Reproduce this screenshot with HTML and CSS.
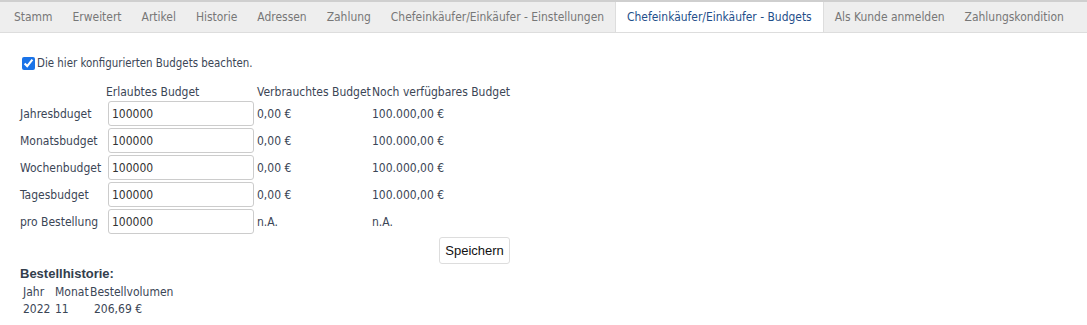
FILE: index.html
```html
<!DOCTYPE html>
<html lang="de">

<head>
    <meta charset="UTF-8">
    <meta name="viewport" content="width=device-width, initial-scale=1.0">
    <title>Budgets</title>
    <link rel="stylesheet" href="styles.css">
</head>

<body>
    <ul class="tabs">
        <li>Stamm</li>
        <li>Erweitert</li>
        <li>Artikel</li>
        <li>Historie</li>
        <li>Adressen</li>
        <li>Zahlung</li>
        <li>Chefeinkäufer/Einkäufer - Einstellungen</li>
        <li class="active">Chefeinkäufer/Einkäufer - Budgets</li>
        <li>Als Kunde anmelden</li>
        <li>Zahlungskondition</li>
    </ul>

    <div class="content">
        <label class="check">
            <input type="checkbox" checked>Die hier konfigurierten Budgets beachten.
        </label>

        <table class="budgets">
            <tr class="head">
                <td class="c1"></td>
                <td class="c2">Erlaubtes Budget</td>
                <td class="c3">Verbrauchtes Budget</td>
                <td>Noch verfügbares Budget</td>
            </tr>
            <tr>
                <td>Jahresbduget</td>
                <td><input type="text" value="100000"></td>
                <td>0,00 €</td>
                <td>100.000,00 €</td>
            </tr>
            <tr>
                <td>Monatsbudget</td>
                <td><input type="text" value="100000"></td>
                <td>0,00 €</td>
                <td>100.000,00 €</td>
            </tr>
            <tr>
                <td>Wochenbudget</td>
                <td><input type="text" value="100000"></td>
                <td>0,00 €</td>
                <td>100.000,00 €</td>
            </tr>
            <tr>
                <td>Tagesbudget</td>
                <td><input type="text" value="100000"></td>
                <td>0,00 €</td>
                <td>100.000,00 €</td>
            </tr>
            <tr>
                <td>pro Bestellung</td>
                <td><input type="text" value="100000"></td>
                <td>n.A.</td>
                <td>n.A.</td>
            </tr>
            <tr class="save">
                <td colspan="4"><button>Speichern</button></td>
            </tr>
        </table>

        <h3>Bestellhistorie:</h3>
        <table class="history">
            <tr>
                <td class="year">Jahr</td>
                <td class="month">Monat</td>
                <td>Bestellvolumen</td>
            </tr>
            <tr>
                <td>2022</td>
                <td>11</td>
                <td class="sum">206,69 €</td>
            </tr>
        </table>
    </div>
</body>

</html>
```

FILE: styles.css
```css
* {
    margin: 0;
    padding: 0;
    list-style: none;
    box-sizing: border-box;
}

body {
    font-family: "DejaVu Sans Condensed", "Liberation Sans", sans-serif;
    font-size: 12px;
    color: #3b4656;
    background: #fff;
}

.tabs {
    display: flex;
    height: 33px;
    background-color: #eeeeee;
    border-top: 2px solid #cfcfcf;
    border-bottom: 1px solid #dddddd;
    padding-left: 4px;
    overflow: hidden;
}

.tabs li {
    flex-shrink: 0;
    white-space: nowrap;
    padding: 0 10px;
    line-height: 30px;
    font-size: 11.95px;
    color: #777777;
}

.tabs .active {
    background-color: #fff;
    color: #1f4f8a;
    border-left: 1px solid #dddddd;
    border-right: 1px solid #dddddd;
    height: 31px;
    padding: 0 11px;
    margin: 0 1px 0 1px;
}

.content {
    padding: 23px 20px 0 20px;
}

.check {
    display: flex;
    align-items: center;
    line-height: 15px;
    margin-left: 1px;
    font-size: 11.4px;
}

.check input {
    width: 13px;
    height: 13px;
    margin: 0 2px 0 1px;
    accent-color: #1a73e8;
}

.budgets {
    border-collapse: collapse;
    margin-top: 13px;
}

.budgets td {
    padding: 0;
    height: 27px;
    vertical-align: middle;
    white-space: nowrap;
}

.budgets .head td {
    height: 16px;
}

.budgets .c1 {
    width: 86px;
}

.budgets .c2 {
    width: 151px;
}

.budgets .c3 {
    width: 115px;
}

.budgets input {
    display: block;
    width: 146px;
    height: 25px;
    margin-left: 2px;
    border: 1px solid #cccccc;
    border-radius: 3px;
    padding: 0 3px;
    font-family: inherit;
    font-size: 12px;
    color: #333;
}

.budgets .save td {
    height: 29px;
    text-align: right;
    vertical-align: bottom;
}

.save button {
    width: 71px;
    height: 27px;
    background: #fff;
    border: 1px solid #dddddd;
    border-radius: 3px;
    font-family: "Liberation Sans", sans-serif;
    font-size: 13px;
    color: #111;
}

h3 {
    font-family: "Liberation Sans", sans-serif;
    font-size: 13px;
    font-weight: bold;
    color: #333e4c;
    margin-top: 2px;
    line-height: 16px;
}

.history {
    border-collapse: collapse;
    margin-left: 3px;
    margin-top: 1px;
}

.history td {
    padding: 0;
    height: 17px;
    white-space: nowrap;
}

.history .year {
    width: 32px;
}

.history .month {
    width: 35px;
}

.history .sum {
    padding-left: 4px;
}
```
